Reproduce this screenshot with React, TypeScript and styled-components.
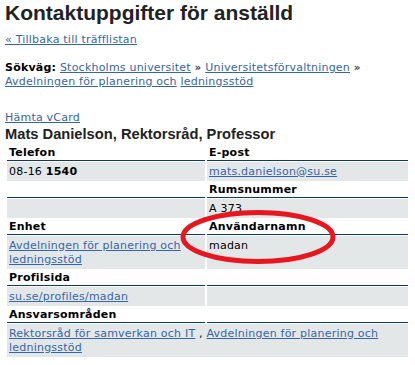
import React from 'react';
import styled, { createGlobalStyle } from 'styled-components';

const GlobalStyle = createGlobalStyle`
  body {
    margin: 0;
    background: #ffffff;
    font-family: "DejaVu Sans", Verdana, sans-serif;
    font-size: 11px;
    line-height: 14px;
    letter-spacing: 0.22px;
    color: #000000;
  }
`;

const Page = styled.div`
  position: relative;
  padding: 0 5px;
`;

const Title = styled.h1`
  margin: 1px 0 0;
  font-family: "Liberation Sans", Arial, sans-serif;
  font-size: 21px;
  line-height: 24px;
  font-weight: bold;
  letter-spacing: 0;
  color: #222222;
`;

const Link = styled.a`
  color: #3565a9;
  text-decoration: underline;
`;

const Para = styled.p<{ $top: number }>`
  margin: ${p => p.$top}px 0 0;
`;

const Label = styled.strong`
  font-weight: bold;
`;

const PersonName = styled.h2`
  margin: 1px 0 0;
  font-family: "Liberation Sans", Arial, sans-serif;
  font-size: 14.7px;
  line-height: 16px;
  font-weight: bold;
  letter-spacing: 0;
  color: #222222;
`;

const InfoTable = styled.table`
  margin: 2px 0 0;
  table-layout: fixed;
  width: 405px;
  border-collapse: separate;
  border-spacing: 2px 1px;
`;

const HeadCell = styled.th`
  padding: 1px 2px 0;
  text-align: left;
  font-weight: bold;
  border-bottom: 1px solid #0c3a66;
`;

const DataCell = styled.td`
  padding: 2.5px 2px;
  background: #e4e7e8;
  vertical-align: top;
`;

const Marker = styled.svg`
  position: absolute;
  left: 180px;
  top: 209px;
  pointer-events: none;
`;

export default function App() {
  return (
    <Page>
      <GlobalStyle />
      <Title>Kontaktuppgifter för anställd</Title>
      <Para $top={8}><Link href="#">« Tillbaka till träfflistan</Link></Para>
      <Para $top={14}>
        <Label>Sökväg:</Label> <Link href="#">Stockholms universitet</Link> » <Link href="#">Universitetsförvaltningen</Link> »{' '}
        <Link href="#">Avdelningen för planering och</Link> <Link href="#">ledningsstöd</Link>
      </Para>
      <Para $top={22}><Link href="#">Hämta vCard</Link></Para>
      <PersonName>Mats Danielson, Rektorsråd, Professor</PersonName>
      <InfoTable>
        <colgroup>
          <col style={{ width: 198 }} />
          <col style={{ width: 201 }} />
        </colgroup>
        <tbody>
          <tr>
            <HeadCell>Telefon</HeadCell>
            <HeadCell>E-post</HeadCell>
          </tr>
          <tr>
            <DataCell>08-16 <b>1540</b></DataCell>
            <DataCell><Link href="#">mats.danielson@su.se</Link></DataCell>
          </tr>
          <tr>
            <HeadCell></HeadCell>
            <HeadCell>Rumsnummer</HeadCell>
          </tr>
          <tr>
            <DataCell></DataCell>
            <DataCell>A 373</DataCell>
          </tr>
          <tr>
            <HeadCell>Enhet</HeadCell>
            <HeadCell>Användarnamn</HeadCell>
          </tr>
          <tr>
            <DataCell><Link href="#">Avdelningen för planering och ledningsstöd</Link></DataCell>
            <DataCell>madan</DataCell>
          </tr>
          <tr>
            <HeadCell>Profilsida</HeadCell>
            <HeadCell></HeadCell>
          </tr>
          <tr>
            <DataCell><Link href="#">su.se/profiles/madan</Link></DataCell>
            <DataCell></DataCell>
          </tr>
          <tr>
            <HeadCell>Ansvarsområden</HeadCell>
            <HeadCell></HeadCell>
          </tr>
          <tr>
            <DataCell colSpan={2}>
              <Link href="#">Rektorsråd för samverkan och IT</Link> , <Link href="#">Avdelningen för planering och ledningsstöd</Link>
            </DataCell>
          </tr>
        </tbody>
      </InfoTable>
      <Marker width="156" height="56" viewBox="0 0 156 56">
        <ellipse cx="78" cy="27" rx="75" ry="24.5" fill="none" stroke="#e8161e" strokeWidth="5" />
      </Marker>
    </Page>
  );
}
